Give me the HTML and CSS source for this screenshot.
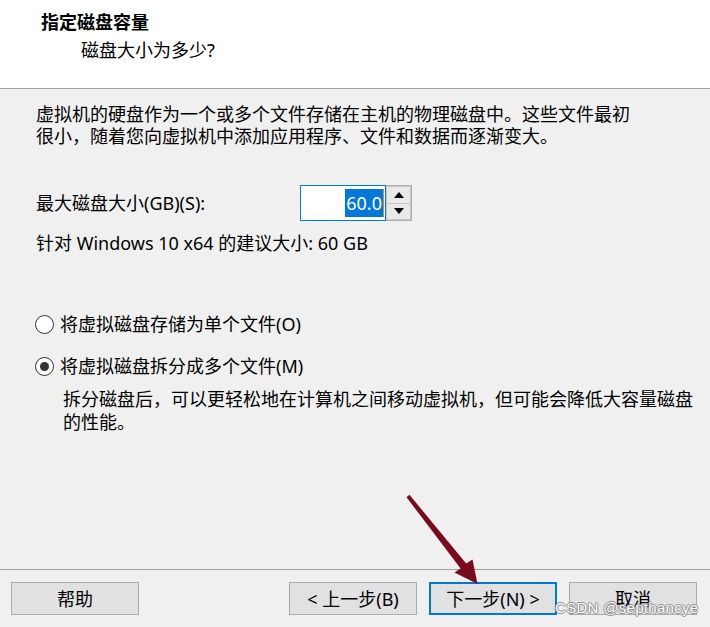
FILE: index.html
```html
<!DOCTYPE html>
<html lang="zh-CN">
<head>
<meta charset="utf-8">
<title>新建虚拟机向导</title>
<link rel="stylesheet" href="styles.css">
</head>
<body>
<div class="dialog">
  <header class="head">
    <div class="title">指定磁盘容量</div>
    <div class="subtitle">磁盘大小为多少?</div>
  </header>
  <main class="content">
    <p class="intro">虚拟机的硬盘作为一个或多个文件存储在主机的物理磁盘中。这些文件最初<br>很小，随着您向虚拟机中添加应用程序、文件和数据而逐渐变大。</p>
    <div class="size-row">
      <span class="size-label">最大磁盘大小(GB)(S):</span>
      <div class="spin">
        <div class="spin-input"><span class="sel">60.0</span><span class="caret"></span></div>
        <div class="spin-btns">
          <div class="spin-btn"><svg width="10" height="6" viewBox="0 0 10 6"><path d="M0 6 L5 0 L10 6 Z" fill="#000"/></svg></div>
          <div class="spin-btn"><svg width="10" height="6" viewBox="0 0 10 6"><path d="M0 0 L10 0 L5 6 Z" fill="#000"/></svg></div>
        </div>
      </div>
    </div>
    <p class="recommend">针对 Windows 10 x64 的建议大小: 60 GB</p>
    <div class="options">
      <label class="radio"><span class="dot"></span><span>将虚拟磁盘存储为单个文件(O)</span></label>
      <label class="radio"><span class="dot on"></span><span>将虚拟磁盘拆分成多个文件(M)</span></label>
      <p class="desc">拆分磁盘后，可以更轻松地在计算机之间移动虚拟机，但可能会降低大容量磁盘<br>的性能。</p>
    </div>
  </main>
  <footer class="foot">
    <button class="btn">帮助</button>
    <div class="spacer"></div>
    <button class="btn">&lt; 上一步(B)</button>
    <button class="btn primary">下一步(N) &gt;</button>
    <button class="btn">取消</button>
  </footer>
</div>
<svg class="arrow" width="710" height="627" viewBox="0 0 710 627">
  <polygon points="409.5,494.8 466.2,563.6 472.5,559.5 477.5,584 454.5,572.5 460.6,568.4 406.5,497.2" fill="#7b0a1c"/>
</svg>
<div class="watermark">CSDN @septhancye</div>
</body>
</html>
```
FILE: styles.css
```css
html, body {
  margin: 0;
  padding: 0;
}
body {
  width: 710px;
  height: 627px;
  background: #f0f0f0;
  font-family: "Noto Sans", "Noto Sans CJK SC", sans-serif;
  font-size: 18px;
  color: #000;
  position: relative;
  overflow: hidden;
}
.dialog {
  display: flex;
  flex-direction: column;
  height: 627px;
}
.head {
  background: #fff;
  height: 89px;
  box-sizing: border-box;
  border-bottom: 1px solid #a0a0a0;
  padding-top: 11px;
}
.title {
  font-weight: bold;
  line-height: 22px;
  padding-left: 41px;
}
.subtitle {
  line-height: 22px;
  margin-top: 6px;
  padding-left: 81px;
}
.content {
  flex: 1;
  padding: 14px 0 0 36px;
}
.intro {
  margin: 0;
  line-height: 22px;
}
.size-row {
  display: flex;
  align-items: center;
  margin-top: 38px;
  height: 36px;
}
.size-label {
  width: 264px;
  line-height: 22px;
}
.spin {
  display: flex;
  height: 36px;
}
.spin-input {
  width: 86px;
  box-sizing: border-box;
  border: 1px solid #0078d7;
  background: #fff;
  display: flex;
  align-items: center;
  justify-content: flex-end;
  padding-right: 1px;
}
.sel {
  background: #0078d7;
  color: #fff;
  line-height: 28px;
  padding: 0 1px;
}
.caret {
  width: 1px;
  height: 28px;
  background: #e08a30;
}
.spin-btns {
  display: flex;
  flex-direction: column;
  width: 26px;
  border: 1px solid #adadad;
  border-left: 0;
  box-sizing: border-box;
}
.spin-btn {
  flex: 1;
  display: flex;
  align-items: center;
  justify-content: center;
  background: #e9e9e9;
  border: 1px solid #c8c8c8;
}
.spin-btn + .spin-btn {
  border-top: 0;
}
.recommend {
  margin: 11px 0 0;
  line-height: 22px;
}
.options {
  margin-top: 59px;
  margin-left: -1px;
}
.radio {
  display: flex;
  align-items: center;
  gap: 6px;
  height: 22px;
  line-height: 22px;
}
.radio + .radio {
  margin-top: 20px;
}
.dot {
  width: 19px;
  height: 19px;
  box-sizing: border-box;
  border: 1px solid #333;
  border-radius: 50%;
  background: #fff;
  display: flex;
  align-items: center;
  justify-content: center;
}
.dot.on::after {
  content: "";
  width: 9px;
  height: 9px;
  border-radius: 50%;
  background: #333;
}
.desc {
  margin: 11px 0 0 28px;
  line-height: 23px;
}
.foot {
  height: 58px;
  box-sizing: border-box;
  border-top: 1px solid #a0a0a0;
  display: flex;
  align-items: flex-start;
  gap: 12px;
  padding: 12px 13px 0 11px;
}
.spacer {
  flex: 1;
}
.btn {
  width: 128px;
  height: 33px;
  box-sizing: border-box;
  border: 1px solid #adadad;
  background: #e1e1e1;
  font-family: "Noto Sans", "Noto Sans CJK SC", sans-serif;
  font-size: 18px;
  color: #000;
  padding: 0;
  line-height: 30px;
}
.btn.primary {
  border: 2px solid #0078d7;
}
.arrow {
  position: absolute;
  left: 0;
  top: 0;
  pointer-events: none;
}
.watermark {
  position: absolute;
  left: 555px;
  top: 599px;
  font-family: "Liberation Sans", sans-serif;
  font-size: 15px;
  color: #fff;
  text-shadow: 1px 0 0 #888, -1px 0 0 #888, 0 1px 0 #888, 0 -1px 0 #888;
  opacity: 0.9;
  letter-spacing: 0.3px;
}
```
